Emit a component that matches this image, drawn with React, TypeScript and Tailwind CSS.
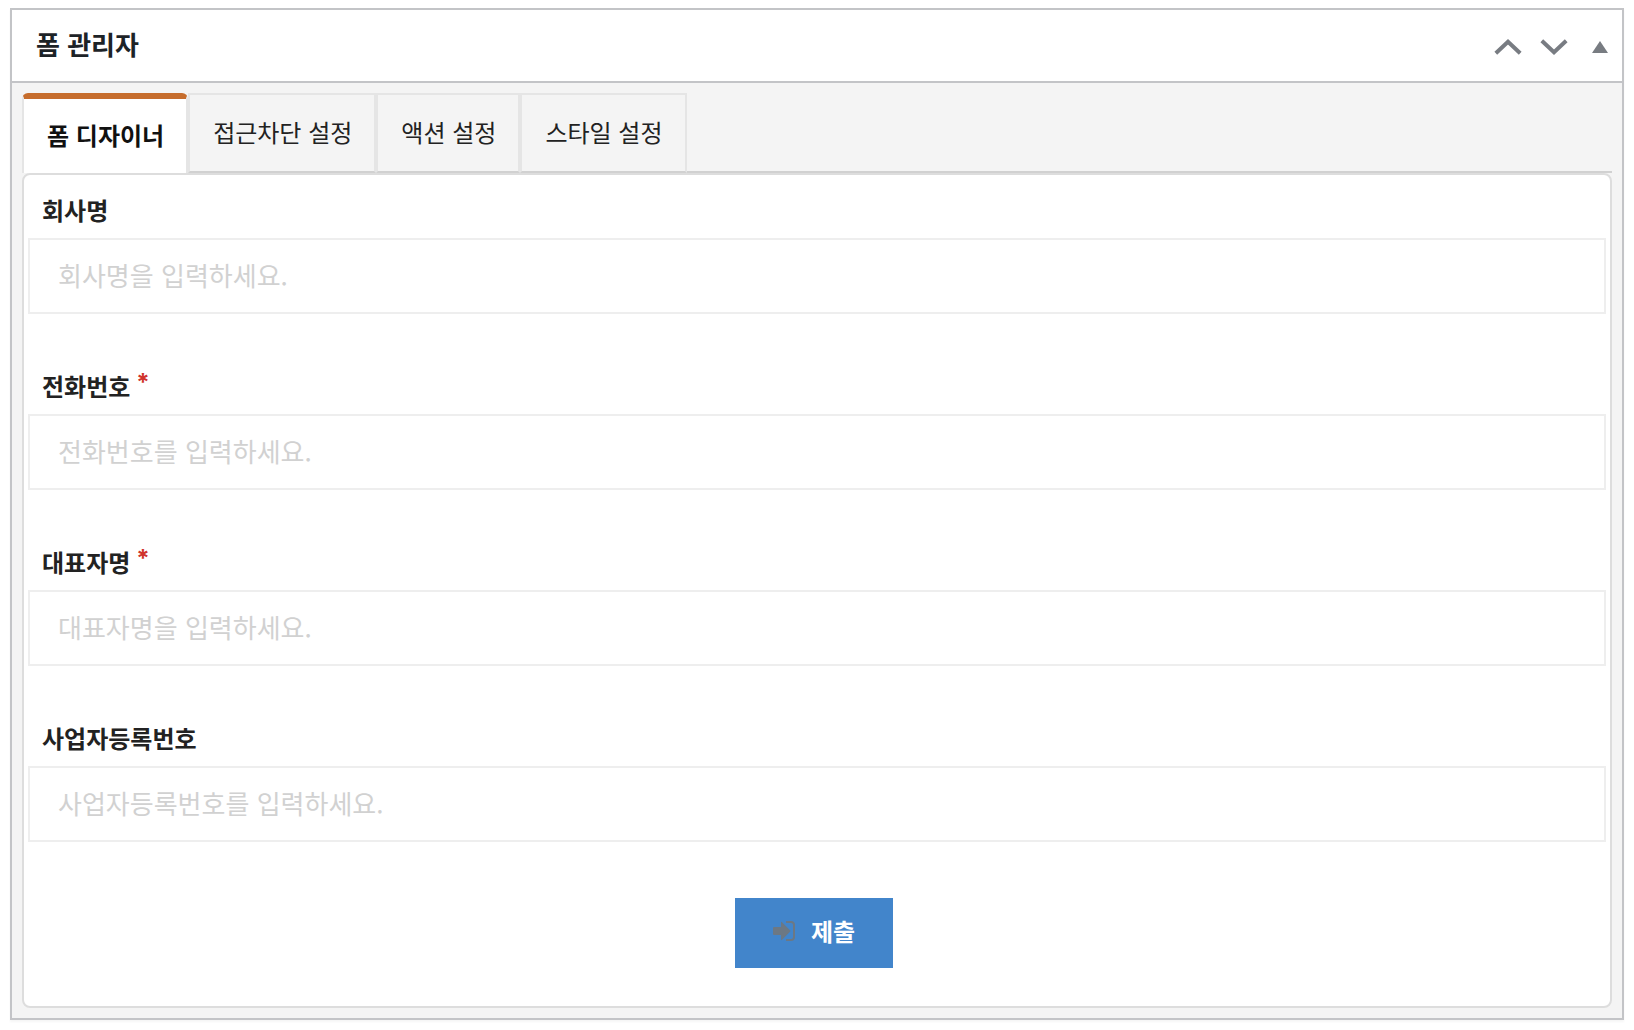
import { useState } from "react";

type Field = { id: string; label: string; placeholder: string; required?: boolean };

const tabs = ["폼 디자이너", "접근차단 설정", "액션 설정", "스타일 설정"];

const fields: Field[] = [
  { id: "company", label: "회사명", placeholder: "회사명을 입력하세요." },
  { id: "phone", label: "전화번호", placeholder: "전화번호를 입력하세요.", required: true },
  { id: "owner", label: "대표자명", placeholder: "대표자명을 입력하세요.", required: true },
  { id: "bizno", label: "사업자등록번호", placeholder: "사업자등록번호를 입력하세요." },
];

function Header() {
  return (
    <header className="flex h-[73px] items-center justify-between border-b-2 border-[#c3c4c7] bg-white pl-6 pr-3.5">
      <h2 className="pb-[3px] text-[26px] leading-9 font-bold text-[#1d2327]">폼 관리자</h2>
      <div className="flex items-center pt-0.5 text-[#787c82]">
        <button type="button" aria-label="위로 이동" className="mr-[18px]">
          <svg width="28" height="16" viewBox="0 0 28 16" fill="none" stroke="currentColor" strokeWidth="4">
            <path d="M1.8 14.2 14 2.8 26.2 14.2" />
          </svg>
        </button>
        <button type="button" aria-label="아래로 이동" className="mr-6">
          <svg width="28" height="16" viewBox="0 0 28 16" fill="none" stroke="currentColor" strokeWidth="4">
            <path d="M1.8 1.8 14 13.2 26.2 1.8" />
          </svg>
        </button>
        <button type="button" aria-label="패널 접기">
          <svg width="16" height="12" viewBox="0 0 16 12" fill="currentColor">
            <path d="M8 0 16 12H0z" />
          </svg>
        </button>
      </div>
    </header>
  );
}

function Tabs({ active, onSelect }: { active: number; onSelect: (index: number) => void }) {
  return (
    <div role="tablist" className="flex h-20">
      {tabs.map((tab, index) => (
        <button
          key={tab}
          type="button"
          role="tab"
          aria-selected={index === active}
          onClick={() => onSelect(index)}
          className={
            index === active
              ? "shrink-0 rounded-t-md border-x-2 border-t-[6px] border-x-[#e5e5e5] border-t-[#c66d2d] bg-white pr-[22px] pb-0.5 pl-[23px] text-2xl font-bold text-[#111111]"
              : "shrink-0 border-2 border-[#e5e5e5] border-b-[#d1d1d1] pr-[22px] pb-0.5 pl-[23px] text-2xl text-[#222222]"
          }
        >
          {tab}
        </button>
      ))}
      <div className="grow border-b-2 border-[#d1d1d1]" />
    </div>
  );
}

function FormField({ id, label, placeholder, required }: Field) {
  return (
    <div className="flex flex-col">
      <label htmlFor={id} className="flex h-[63px] items-center px-3.5 pt-[7px] text-2xl leading-9 font-bold text-[#222222]">
        {label}
        {required && <span className="-mt-1.5 ml-1.5 font-['Inter',sans-serif] text-2xl leading-6 text-[#d0342c]">*</span>}
      </label>
      <input
        id={id}
        type="text"
        required={required}
        placeholder={placeholder}
        className="h-[76px] w-full border-2 border-[#eeeeee] bg-white px-7 pb-1 text-[26px] text-[#222222] outline-none placeholder:text-[#d1d1d1]"
      />
    </div>
  );
}

export default function App() {
  const [active, setActive] = useState(0);
  return (
    <main
      lang="ko"
      className="min-h-screen bg-white px-2.5 pt-2 pb-2 font-['Noto_Sans_CJK_KR','Noto_Sans',sans-serif]"
    >
      <section className="border-2 border-[#c3c4c7] bg-[#f4f4f4] shadow-[0_2px_2px_rgba(0,0,0,0.04)]">
        <Header />
        <div className="p-2.5">
          <Tabs active={active} onSelect={setActive} />
          <form
            onSubmit={(event) => event.preventDefault()}
            className="rounded-lg border-2 border-[#dddddd] bg-white px-1 pb-[38px]"
          >
            <div className="flex flex-col gap-[37px]">
              {fields.map((field) => (
                <FormField key={field.id} {...field} />
              ))}
            </div>
            <div className="mt-14 flex justify-center pr-1.5">
              <button
                type="submit"
                className="flex h-[70px] items-center bg-[#4285cb] px-[38px] pb-1 text-2xl font-bold text-white"
              >
                <svg width="22" height="20" viewBox="0 0 22 20" fill="none" className="mr-4 text-[#6c7884]">
                  <path d="M1 6H8V1.5Q8 .3 9 1.2L17 9.2Q18 10 17 10.8L9 18.8Q8 19.7 8 18.5V14H1Q0 14 0 13V7Q0 6 1 6Z" fill="currentColor" />
                  <path d="M13 1H18Q21 1 21 4V16Q21 19 18 19H13" stroke="currentColor" strokeWidth="2" />
                </svg>
                제출
              </button>
            </div>
          </form>
        </div>
      </section>
    </main>
  );
}
